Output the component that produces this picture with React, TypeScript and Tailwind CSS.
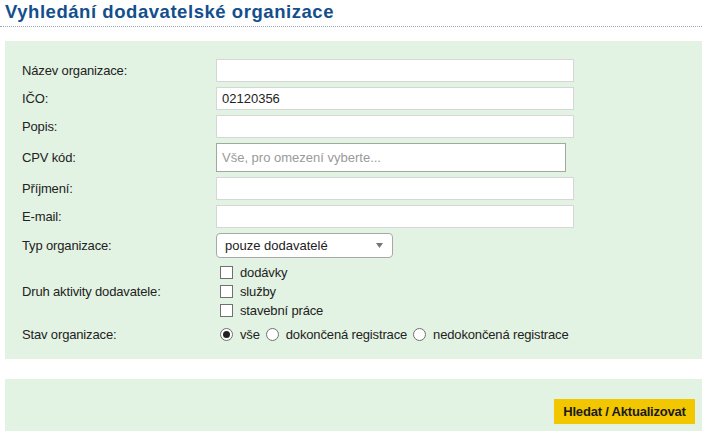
import React, { useState } from 'react';

const font = { fontFamily: '"Liberation Sans", Arial, sans-serif' };

const Label: React.FC<{ children: React.ReactNode; className?: string }> = ({ children, className }) => (
  <div className={`w-[194px] shrink-0 text-[13px] tracking-[-0.15px] text-[#222] ${className ?? ''}`}>{children}</div>
);

const TextField: React.FC<{ value?: string }> = ({ value }) => (
  <input
    defaultValue={value}
    className="h-[23px] w-[358px] border border-[#d6d6d6] bg-white px-[5px] text-[13px] text-[#222] outline-none"
  />
);

const Row: React.FC<{ label: string; children: React.ReactNode }> = ({ label, children }) => (
  <div className="flex items-center">
    <Label>{label}</Label>
    {children}
  </div>
);

const Checkbox: React.FC<{ label: string }> = ({ label }) => (
  <label className="flex h-[19px] items-center text-[13px] tracking-[-0.15px] text-[#222]">
    <span className="ml-[4px] mr-[7px] h-[13px] w-[13px] border border-[#707070] bg-white" />
    {label}
  </label>
);

const Radio: React.FC<{ label: string; checked: boolean; onClick: () => void }> = ({ label, checked, onClick }) => (
  <label onClick={onClick} className="flex items-center text-[13px] tracking-[-0.15px] text-[#222]">
    <span className="mr-[7px] flex h-[13px] w-[13px] items-center justify-center rounded-full border border-[#707070] bg-white">
      {checked && <span className="h-[7px] w-[7px] rounded-full bg-[#222]" />}
    </span>
    {label}
  </label>
);

export default function App() {
  const [stav, setStav] = useState('vse');

  return (
    <div className="w-[702px] bg-white" style={font}>
      <h1 className="h-[26px] pl-[5px] text-[18.5px] font-bold leading-[24px] tracking-[0.55px] text-[#134f8c]">
        Vyhledání dodavatelské organizace
      </h1>
      <div className="border-t border-dotted border-[#9aaabb]" />

      <div className="ml-[5px] mt-[14px] flex flex-col gap-[5px] bg-[#e3f3e3] pb-[15px] pl-[17px] pt-[18px]">
        <Row label="Název organizace:">
          <TextField />
        </Row>
        <Row label="IČO:">
          <TextField value="02120356" />
        </Row>
        <Row label="Popis:">
          <TextField />
        </Row>
        <Row label="CPV kód:">
          <input
            placeholder="Vše, pro omezení vyberte..."
            className="h-[29px] w-[350px] border border-[#a0a8a0] bg-white px-[5px] text-[13px] text-[#222] outline-none placeholder:text-[#9a9a9a]"
          />
        </Row>
        <Row label="Příjmení:">
          <TextField />
        </Row>
        <Row label="E-mail:">
          <TextField />
        </Row>
        <Row label="Typ organizace:">
          <div className="flex h-[25px] w-[177px] items-center justify-between rounded-[4px] border border-[#a8a8a8] bg-white pl-[8px] pr-[9px] text-[13px] text-[#222]">
            <span>pouze dodavatelé</span>
            <svg width="7" height="5" viewBox="0 0 7 5">
              <path d="M0 0 H7 L3.5 5 Z" fill="#777" />
            </svg>
          </div>
        </Row>
        <div className="flex items-center">
          <Label>Druh aktivity dodavatele:</Label>
          <div className="flex flex-col">
            <Checkbox label="dodávky" />
            <Checkbox label="služby" />
            <Checkbox label="stavební práce" />
          </div>
        </div>
        <div className="flex h-[19px] items-center">
          <Label>Stav organizace:</Label>
          <div className="ml-[4px] flex items-center gap-[6px]">
            <Radio label="vše" checked={stav === 'vse'} onClick={() => setStav('vse')} />
            <Radio label="dokončená registrace" checked={stav === 'dok'} onClick={() => setStav('dok')} />
            <Radio label="nedokončená registrace" checked={stav === 'nedok'} onClick={() => setStav('nedok')} />
          </div>
        </div>
      </div>

      <div className="ml-[5px] mt-[20px] flex justify-end bg-[#e3f3e3] pb-[12px] pr-[7px] pt-[20px]">
        <button className="h-[25px] w-[141px] bg-[#f2c700] text-[13px] font-bold tracking-[-0.2px] text-[#1a1a1a]">
          Hledat / Aktualizovat
        </button>
      </div>
    </div>
  );
}
